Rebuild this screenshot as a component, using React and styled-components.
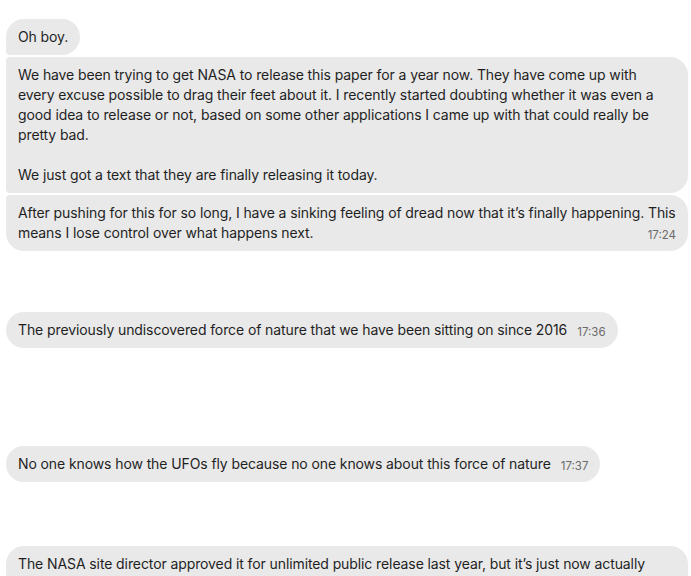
import styled, { createGlobalStyle, css } from "styled-components";

const GlobalStyle = createGlobalStyle`
  html, body {
    margin: 0;
    padding: 0;
    background: #ffffff;
  }
  body {
    font-family: Inter, "Noto Sans", sans-serif;
    color: #1f1f1f;
  }
`;

const Thread = styled.div`
  box-sizing: border-box;
  display: flex;
  flex-direction: column;
  align-items: flex-start;
  padding: 19px 3px 0 6px;
`;

const Group = styled.div`
  display: flex;
  flex-direction: column;
  align-items: flex-start;
  gap: 2px;
  margin-top: ${(props) => props.$space || 0}px;
`;

// radius depends on where the bubble sits in its group
const shapes = {
  single: css`border-radius: 18px;`,
  first: css`border-radius: 18px 18px 18px 4px;`,
  middle: css`border-radius: 4px 18px 18px 4px;`,
  last: css`border-radius: 4px 18px 18px 18px;`,
};

const Bubble = styled.div`
  box-sizing: border-box;
  display: flow-root;
  max-width: 100%;
  padding: 8px 12px;
  background: #e9e9e9;
  font-size: 14px;
  line-height: 20px;
  letter-spacing: -0.1px;
  white-space: pre-wrap;
  ${(props) => shapes[props.$shape || "single"]}
`;

const Time = styled.span`
  float: right;
  margin-left: 10px;
  padding-top: 5px;
  font-size: 11.5px;
  line-height: 15px;
  letter-spacing: 0;
  color: #6b6b6b;
  white-space: nowrap;
`;

const Message = ({ shape, time, children }) => (
  <Bubble $shape={shape}>
    {children}
    {time && <Time>{time}</Time>}
  </Bubble>
);

export default function App() {
  return (
    <>
      <GlobalStyle />
      <Thread>
        <Group>
          <Message shape="first">Oh boy.</Message>
          <Message shape="middle">
            {"We have been trying to get NASA to release this paper for a year now. They have come up with every excuse possible to drag their feet about it. I recently started doubting whether it was even a good idea to release or not, based on some other applications I came up with that could really be pretty bad.\n\nWe just got a text that they are finally releasing it today."}
          </Message>
          <Message shape="last" time="17:24">
            After pushing for this for so long, I have a sinking feeling of dread now that it’s finally happening. This means I lose control over what happens next.
          </Message>
        </Group>
        <Group $space={61}>
          <Message time="17:36">
            The previously undiscovered force of nature that we have been sitting on since 2016
          </Message>
        </Group>
        <Group $space={98}>
          <Message time="17:37">
            No one knows how the UFOs fly because no one knows about this force of nature
          </Message>
        </Group>
        <Group $space={64}>
          <Message time="17:38">
            The NASA site director approved it for unlimited public release last year, but it’s just now actually happening. They have been sitting on it the whole time.
          </Message>
        </Group>
      </Thread>
    </>
  );
}
